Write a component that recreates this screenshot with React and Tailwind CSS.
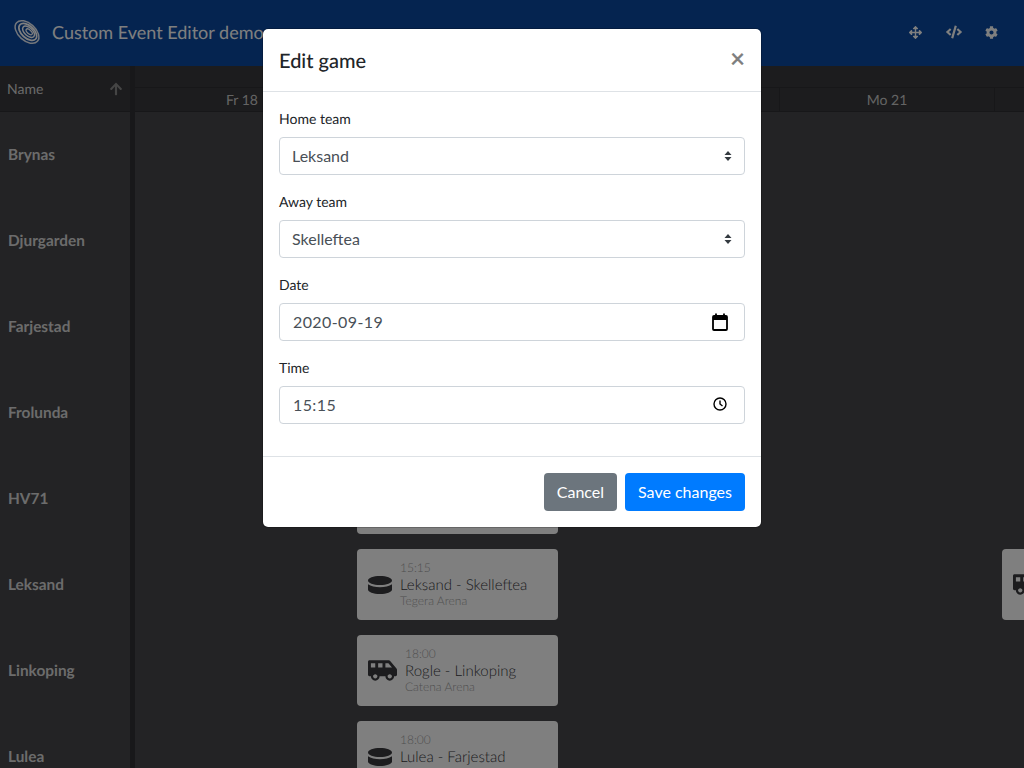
import React from 'react';
import { FaArrowsAlt, FaCode, FaCog, FaArrowUp, FaHockeyPuck, FaShuttleVan } from 'react-icons/fa';

const teams = ['Brynas', 'Djurgarden', 'Farjestad', 'Frolunda', 'HV71', 'Leksand', 'Linkoping', 'Lulea'];
const days = ['Fr 18', 'Sa 19', 'Su 20', 'Mo 21', 'Tu 22'];

const rowCards = {
  HV71: [{ left: 'ml-[222px]' }],
  Leksand: [
    { left: 'ml-[222px]', icon: 'puck', time: '15:15', name: 'Leksand - Skelleftea', place: 'Tegera Arena' },
    { left: 'ml-[444px]', icon: 'van' },
  ],
  Linkoping: [{ left: 'ml-[222px]', icon: 'van', time: '18:00', name: 'Rogle - Linkoping', place: 'Catena Arena' }],
  Lulea: [{ left: 'ml-[222px]', icon: 'puck', time: '18:00', name: 'Lulea - Farjestad' }],
};

const Logo = () => (
  <svg width="28" height="28" viewBox="0 0 28 28" fill="none" stroke="#fff" className="shrink-0">
    <g transform="rotate(42 14 14)">
      <ellipse cx="14" cy="14" rx="14" ry="8.6" strokeWidth="1.5" strokeOpacity="0.9" />
      <ellipse cx="14.5" cy="13.4" rx="10.6" ry="6.2" strokeWidth="1.7" />
      <ellipse cx="15" cy="12.8" rx="7.2" ry="4" strokeWidth="1.5" />
      <ellipse cx="15.5" cy="12.4" rx="3.8" ry="1.9" strokeWidth="1.3" />
    </g>
  </svg>
);

const EventCard = ({ card }) => (
  <div className={`${card.left} shrink-0 w-[201px] h-[71px] bg-white rounded flex items-center pl-[11px] text-[#38383c]`}>
    {card.icon === 'puck' && <FaHockeyPuck className="text-[24px] text-[#38383c] shrink-0 mr-2" />}
    {card.icon === 'van' && <FaShuttleVan className="text-[29px] text-[#38383c] shrink-0 mr-2" />}
    {card.time && (
      <div className="min-w-0 whitespace-nowrap pb-[3px]">
        <div className="pt-[2px] text-[12px] leading-[16px] font-light text-[#a0a0a0]">{card.time}</div>
        <div className="text-[15px] leading-[18px] font-light">{card.name}</div>
        <div className="h-[14px] text-[12px] leading-[14px] font-light text-[#a0a0a0]">{card.place}</div>
      </div>
    )}
  </div>
);

const Label = ({ children }) => (
  <label className="block text-[14px] leading-[21px] mb-2 text-[#212529]">{children}</label>
);

const SelectField = ({ label, value }) => (
  <div className="mb-4">
    <Label>{label}</Label>
    <div className="relative">
      <select
        defaultValue={value}
        className="w-full h-[38px] appearance-none bg-white border border-[#ced4da] rounded px-3 text-[16px] text-[#495057] outline-none"
      >
        <option>{value}</option>
      </select>
      <svg width="8" height="10" viewBox="0 0 8 10" className="absolute right-[13px] top-[14px]" fill="#343a40">
        <path d="M4 0 L7.5 4 H0.5 Z M4 10 L0.5 6 H7.5 Z" />
      </svg>
    </div>
  </div>
);

const InputField = ({ label, value, children }) => (
  <div className="mb-4">
    <Label>{label}</Label>
    <div className="relative">
      <input
        readOnly
        value={value}
        className="w-full h-[38px] bg-white border border-[#ced4da] rounded pl-[13px] pr-3 pb-[2px] text-[16px] tracking-[0.4px] text-[#495057] outline-none"
      />
      {children}
    </div>
  </div>
);

export default function App() {
  return (
    <div className="relative h-screen overflow-hidden bg-[#46464a] font-['Lato','Open_Sans',sans-serif] [text-rendering:geometricPrecision] transform-gpu">
      {/* Top bar */}
      <div className="h-[66px] bg-[#0a48a0] flex items-center pl-[13px] pr-[26px] pb-[2px]">
        <Logo />
        <span className="ml-[11px] text-[18px] text-white whitespace-nowrap">Custom Event Editor demo</span>
        <div className="ml-auto flex items-center gap-[23.5px] text-white text-[13px]">
          <FaArrowsAlt />
          <FaCode className="text-[16px]" />
          <FaCog />
        </div>
      </div>

      {/* Scheduler */}
      <div className="flex">
        <div className="w-[130px] shrink-0">
          <div className="h-[46px] bg-[#38383c] border-b border-[#2e2e32] flex items-center justify-between pl-[7px] pr-[7px] text-[14px] text-[#d4d4d4]">
            <span>Name</span>
            <FaArrowUp className="text-[14px] text-[#8a8a8a]" />
          </div>
          {teams.map((t) => (
            <div key={t} className="h-[86px] flex items-center pl-2 pt-[2px] text-[15.4px] font-bold text-[#d8d8d8]">
              {t}
            </div>
          ))}
        </div>
        <div className="w-[5px] shrink-0 bg-[#303034]" />
        <div className="flex-1 min-w-0">
          <div className="h-[46px] bg-[#38383c] border-b border-[#2e2e32]">
            <div className="h-[22px] border-b border-[#2e2e32]" />
            <div className="flex h-[23px]">
              {days.map((d) => (
                <div key={d} className="w-[215px] shrink-0 border-r border-[#2e2e32] flex items-center justify-center text-[14px] text-[#c8c8c8]">
                  {d}
                </div>
              ))}
            </div>
          </div>
          {teams.map((t) => (
            <div key={t} className="h-[86px] py-[7px] flex">
              {(rowCards[t] || []).map((c, i) => (
                <EventCard key={i} card={c} />
              ))}
            </div>
          ))}
        </div>
      </div>

      {/* Modal */}
      <div className="absolute inset-0 bg-black/50 flex justify-center items-start pt-7">
        <div className="w-[500px] bg-white bg-clip-padding border border-black/20 rounded-md text-[#212529]">
          <div className="flex items-center justify-between px-4 h-[63px] border-b border-[#dee2e6]">
            <h5 className="text-[20px] leading-[30px] font-medium pt-[2px]">Edit game</h5>
            <button className="text-[26px] leading-[30px] font-bold text-black/50 pb-[4px]">×</button>
          </div>
          <div className="p-4">
            <SelectField label="Home team" value="Leksand" />
            <SelectField label="Away team" value="Skelleftea" />
            <InputField label="Date" value="2020-09-19">
              <svg width="16" height="18" viewBox="0 0 16 18" className="absolute right-[17px] top-[10px]" fill="none" stroke="#000">
                <rect x="1" y="3" width="14" height="14" rx="1" strokeWidth="1.8" />
                <path d="M1 5.5 H15" strokeWidth="3" />
                <path d="M4 0.5 V3 M12 0.5 V3" strokeWidth="1.8" />
              </svg>
            </InputField>
            <InputField label="Time" value="15:15">
              <svg width="14" height="14" viewBox="0 0 14 14" className="absolute right-[18px] top-[11px]" fill="none" stroke="#000" strokeWidth="1.4">
                <circle cx="7" cy="7" r="6" />
                <path d="M7 3.5 V7 L9.5 9" />
              </svg>
            </InputField>
          </div>
          <div className="flex justify-end gap-2 p-4 border-t border-[#dee2e6]">
            <button className="h-[38px] px-[13px] rounded bg-[#6c757d] text-white text-[16px]">Cancel</button>
            <button className="h-[38px] px-[13px] rounded bg-[#007bff] text-white text-[16px]">Save changes</button>
          </div>
        </div>
      </div>
    </div>
  );
}
